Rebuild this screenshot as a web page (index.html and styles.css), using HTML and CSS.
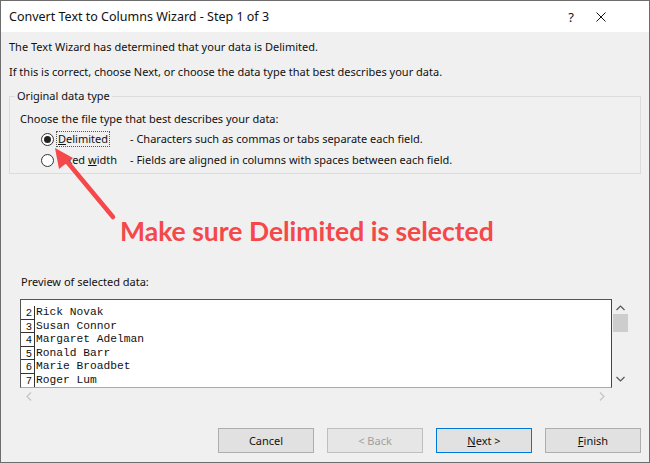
FILE: index.html
```html
<!DOCTYPE html>
<html>
<head>
    <title>Convert Text to Columns Wizard</title>
    <link rel="stylesheet" href="styles.css">
</head>
<body>
    <div class="window">
        <div class="titlebar">
            <span class="title">Convert Text to Columns Wizard - Step 1 of 3</span>
            <span class="help">?</span>
            <svg class="close" width="10" height="10" viewBox="0 0 10 10">
                <path d="M0.5 0.5 L9.5 9.5 M9.5 0.5 L0.5 9.5" stroke="#111" stroke-width="1" fill="none"/>
            </svg>
        </div>

        <div class="body">
            <p class="intro first">The Text Wizard has determined that your data is Delimited.</p>
            <p class="intro">If this is correct, choose Next, or choose the data type that best describes your data.</p>

            <fieldset class="group">
                <legend>Original data type</legend>
                <p class="prompt">Choose the file type that best describes your data:</p>
                <div class="option">
                    <span class="radio checked"></span>
                    <span class="opt-label"><span class="focus"><u>D</u>elimited</span></span>
                    <span class="opt-desc">- Characters such as commas or tabs separate each field.</span>
                </div>
                <div class="option">
                    <span class="radio"></span>
                    <span class="opt-label"><span>Fixed <u>w</u>idth</span></span>
                    <span class="opt-desc">- Fields are aligned in columns with spaces between each field.</span>
                </div>
            </fieldset>

            <p class="callout">Make sure Delimited is selected</p>

            <p class="preview-label">Preview of selected data:</p>
            <div class="preview">
                <div class="preview-box">
                    <div class="row"><span class="num">2</span><span class="name">Rick Novak</span></div>
                    <div class="row"><span class="num">3</span><span class="name">Susan Connor</span></div>
                    <div class="row"><span class="num">4</span><span class="name">Margaret Adelman</span></div>
                    <div class="row"><span class="num">5</span><span class="name">Ronald Barr</span></div>
                    <div class="row"><span class="num">6</span><span class="name">Marie Broadbet</span></div>
                    <div class="row"><span class="num">7</span><span class="name">Roger Lum</span></div>
                    <div class="row"><span class="num"></span><span class="name"></span></div>
                </div>
                <div class="vscroll">
                    <svg class="chev up" width="9" height="6" viewBox="0 0 9 6"><path d="M0.5 5 L4.5 1 L8.5 5" stroke="#555" stroke-width="1.2" fill="none"/></svg>
                    <div class="thumb"></div>
                    <svg class="chev down" width="9" height="6" viewBox="0 0 9 6"><path d="M0.5 1 L4.5 5 L8.5 1" stroke="#555" stroke-width="1.2" fill="none"/></svg>
                </div>
                <div class="hscroll">
                    <svg class="chev" width="6" height="9" viewBox="0 0 6 9"><path d="M5 0.5 L1 4.5 L5 8.5" stroke="#c4c4c4" stroke-width="1.2" fill="none"/></svg>
                    <svg class="chev" width="6" height="9" viewBox="0 0 6 9"><path d="M1 0.5 L5 4.5 L1 8.5" stroke="#c4c4c4" stroke-width="1.2" fill="none"/></svg>
                </div>
            </div>

            <div class="buttons">
                <button>Cancel</button>
                <button disabled>&lt; Back</button>
                <button class="default"><u>N</u>ext &gt;</button>
                <button><u>F</u>inish</button>
            </div>
        </div>

        <!-- red pointer from the callout to the Delimited option -->
        <svg class="pointer" width="650" height="463" viewBox="0 0 650 463">
            <line x1="113" y1="217" x2="64" y2="158" stroke="#f4484a" stroke-width="4.5" stroke-linecap="round"/>
            <polygon points="55,148 73,158 59,169" fill="#f4484a"/>
        </svg>
    </div>
</body>
</html>
```

FILE: styles.css
```css
body {
    margin: 0;
    font-family: "Noto Sans", sans-serif;
}
p { margin: 0; }

.window {
    position: relative;
    width: 650px;
    height: 463px;
    box-sizing: border-box;
    border: 1px solid #6d6d6d;
    background: #f0f0f0;
    display: flex;
    flex-direction: column;
    color: #111;
    font-size: 11px;
    line-height: 16px;
}

.titlebar {
    height: 31px;
    flex: none;
    background: #fff;
    display: flex;
    align-items: center;
    padding-left: 8px;
    font-size: 12.5px;
}
.title { flex: 1; }
.help { margin-right: 22px; font-size: 13px; }
.close { margin-right: 43px; }

.body {
    flex: 1;
    display: flex;
    flex-direction: column;
    padding: 0 8px 9px 8px;
}

.intro { margin-top: 9px; }
.intro.first { margin-top: 7px; }

.group {
    margin: 8px 0 0 0;
    padding: 0 0 5px 0;
    border: 1px solid #dcdcdc;
    min-width: 0;
}
.group legend {
    margin-left: 5px;
    padding: 0 2px;
    line-height: 16px;
}
.prompt { margin: 7px 0 0 10px; }

.option {
    display: flex;
    align-items: center;
    height: 16px;
    margin-top: 4px;
    padding-left: 31px;
}
.option + .option { margin-top: 5px; }

.radio {
    width: 13px;
    height: 13px;
    box-sizing: border-box;
    border: 1px solid #333;
    border-radius: 50%;
    background: #fff;
    display: flex;
    align-items: center;
    justify-content: center;
    margin-right: 2px;
}
.radio.checked::after {
    content: "";
    width: 7px;
    height: 7px;
    border-radius: 50%;
    background: #222;
}
.opt-label { width: 74px; }
.opt-label > span {
    display: inline-block;
    padding: 0 1px;
    border: 1px dotted transparent;
    line-height: 14px;
}
.opt-label > .focus { border-color: #555; }

.callout {
    margin: 40px 0 0 111px;
    font-family: Lato, sans-serif;
    font-weight: 700;
    font-size: 26.5px;
    line-height: 34px;
    color: #f4484a;
}

.preview-label { margin: 26px 0 0 12px; }

.preview {
    margin: 9px 0 0 11px;
    display: grid;
    grid-template-columns: 592px 17px;
    grid-template-rows: 89px 17px;
}
.preview-box {
    box-sizing: border-box;
    border: 1px solid #555;
    border-right-color: #444;
    border-bottom-color: #aaa;
    background: #fff;
    padding-top: 6px;
    overflow: hidden;
    font-family: "Liberation Mono", monospace;
    font-size: 11.25px;
    line-height: 13.6px;
}
.row { display: flex; height: 13.6px; }
.num {
    width: 14px;
    flex: none;
    box-sizing: border-box;
    border-right: 1px solid #333;
    border-bottom: 1px solid #333;
    font-size: 10.5px;
    line-height: 14px;
    text-align: right;
    padding-right: 2px;
}
.name { padding-left: 1px; }

.vscroll {
    position: relative;
    display: flex;
    flex-direction: column;
    align-items: center;
}
.vscroll .up { margin-top: 6px; }
.vscroll .thumb {
    width: 15px;
    height: 18px;
    margin-top: 3px;
    background: #cdcdcd;
}
.vscroll .down { margin-top: auto; margin-bottom: 6px; }

.hscroll {
    display: flex;
    justify-content: space-between;
    align-items: center;
    padding: 0 7px 0 6px;
}

.buttons {
    margin-top: auto;
    display: flex;
    justify-content: flex-end;
    gap: 13px;
}
.buttons button {
    width: 96px;
    height: 25px;
    box-sizing: border-box;
    border: 1px solid #adadad;
    background: #e1e1e1;
    font-family: "Noto Sans", sans-serif;
    font-size: 11px;
    color: #111;
    padding: 0;
}
.buttons button:disabled {
    color: #a0a0a0;
    border-color: #bfbfbf;
    background: #e6e6e6;
}
.buttons button.default {
    border-color: #0078d7;
}

.pointer {
    position: absolute;
    top: -1px;
    left: -1px;
    pointer-events: none;
}
```
